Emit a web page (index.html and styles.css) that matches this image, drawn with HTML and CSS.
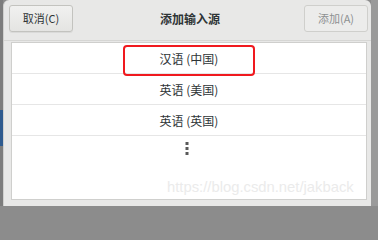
FILE: index.html
```html
<!DOCTYPE html>
<html lang="zh">
<head>
<meta charset="utf-8">
<link rel="stylesheet" href="styles.css">
</head>
<body>
<div class="screen">
  <div class="side side-left"><div class="side-blue"></div></div>
  <div class="dialog">
    <div class="header">
      <button class="btn">取消(C)</button>
      <div class="title">添加输入源</div>
      <button class="btn btn-disabled">添加(A)</button>
    </div>
    <div class="content">
      <div class="list">
        <div class="row">汉语 (中国)</div>
        <div class="row">英语 (美国)</div>
        <div class="row">英语 (英国)</div>
        <div class="more">
          <svg width="4" height="13" viewBox="0 0 4 13"><rect x="0.5" y="0" width="3" height="3" fill="#5a5a5a"/><rect x="0.5" y="5" width="3" height="3" fill="#5a5a5a"/><rect x="0.5" y="10" width="3" height="3" fill="#5a5a5a"/></svg>
        </div>
      </div>
    </div>
    <div class="highlight"></div>
    <div class="watermark">https://blog.csdn.net/jakback</div>
  </div>
  <div class="side side-right"></div>
</div>
</body>
</html>
```

FILE: styles.css
```css
html, body {
  margin: 0;
  padding: 0;
  width: 378px;
  height: 206px;
  overflow: hidden;
  background: #8c8c8c;
  font-family: "Noto Sans CJK SC", "Noto Sans", sans-serif;
  color: #2e3436;
}

.screen {
  display: flex;
  width: 378px;
  height: 206px;
  background: #8c8c8c;
}

.side {
  flex: none;
  position: relative;
}

.side-left {
  width: 3px;
  background: #7d7d7d;
}

.side-blue {
  margin-top: 110px;
  height: 36px;
  background: #2f5b8f;
}

.side-right {
  width: 7px;
  background: #9a9a9a;
}

.dialog {
  flex: 1;
  position: relative;
  display: flex;
  flex-direction: column;
  background: #e8e8e7;
  border-radius: 6px 6px 0 0;
  border-left: 1px solid #d0d0ce;
}

.header {
  display: flex;
  align-items: flex-start;
  justify-content: space-between;
  padding: 5px 3px 0 5px;
  box-sizing: border-box;
  height: 41px;
  border-bottom: 1px solid #d6d6d4;
}

.btn {
  width: 64px;
  height: 27px;
  border: 1px solid #c3c3bf;
  border-radius: 3px;
  background: linear-gradient(#f1f1f0, #e4e4e2);
  font-family: "Noto Sans CJK SC", "Noto Sans", sans-serif;
  font-size: 11px;
  color: #2e3436;
  padding: 0;
  line-height: 25px;
  box-shadow: 0 1px 0 rgba(0,0,0,0.06);
}

.btn-disabled {
  background: #ececeb;
  border-color: #cfcfcc;
  color: #8d9091;
  box-shadow: none;
}

.title {
  font-size: 12px;
  font-weight: bold;
  line-height: 27px;
  margin-left: 3px;
}

.content {
  flex: 1;
  padding: 1px 4px 6px 7px;
  display: flex;
}

.list {
  flex: 1;
  background: #ffffff;
  border: 1px solid #cfcfcd;
  display: flex;
  flex-direction: column;
}

.row {
  height: 30px;
  border-bottom: 1px solid #e6e6e6;
  display: flex;
  align-items: center;
  justify-content: center;
  font-size: 12px;
  color: #2e3436;
}

.more {
  display: flex;
  justify-content: center;
  padding-top: 6px;
  padding-right: 4px;
}

.highlight {
  position: absolute;
  left: 119px;
  top: 45px;
  width: 128px;
  height: 27px;
  border: 2.5px solid #f0191e;
  border-radius: 4px;
}

.watermark {
  position: absolute;
  left: 163px;
  top: 179px;
  font-family: "Liberation Sans", Arial, sans-serif;
  font-size: 14.8px;
  color: #ebebeb;
  white-space: nowrap;
}
```
